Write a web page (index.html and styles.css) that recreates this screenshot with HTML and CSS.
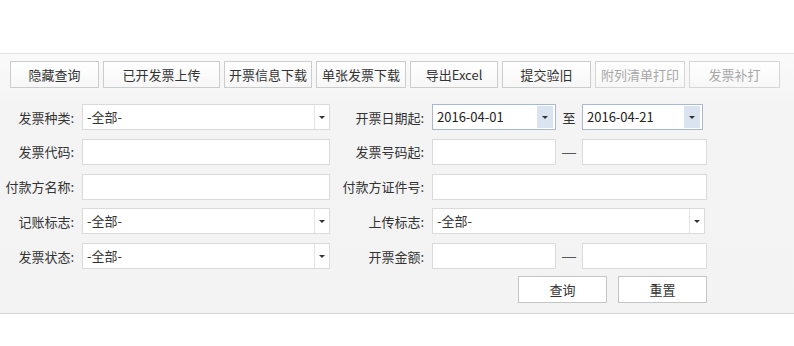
FILE: index.html
```html
<!DOCTYPE html>
<html lang="zh-CN">
<head>
<meta charset="utf-8">
<title>发票查询</title>
<link rel="stylesheet" href="styles.css">
</head>
<body>
<div class="page">
  <div class="panel">
    <div class="toolbar">
      <button class="tb w89">隐藏查询</button>
      <button class="tb w117">已开发票上传</button>
      <button class="tb w88">开票信息下载</button>
      <button class="tb w90">单张发票下载</button>
      <button class="tb w88">导出Excel</button>
      <button class="tb w89">提交验旧</button>
      <button class="tb w90 disabled">附列清单打印</button>
      <button class="tb w91 disabled">发票补打</button>
    </div>
    <div class="form">
      <label class="lbl">发票种类:</label>
      <div class="select"><span class="val">-全部-</span><span class="arrow"><i class="tri"></i></span></div>
      <label class="lbl">开票日期起:</label>
      <div class="pair">
        <div class="date d1"><span class="val">2016-04-01</span><span class="darrow"><i class="tri"></i></span></div>
        <span class="sep">至</span>
        <div class="date d2"><span class="val">2016-04-21</span><span class="darrow"><i class="tri"></i></span></div>
      </div>

      <label class="lbl">发票代码:</label>
      <div class="input"></div>
      <label class="lbl">发票号码起:</label>
      <div class="pair">
        <div class="input i1"></div>
        <span class="sep dash">—</span>
        <div class="input i2"></div>
      </div>

      <label class="lbl">付款方名称:</label>
      <div class="input"></div>
      <label class="lbl">付款方证件号:</label>
      <div class="input"></div>

      <label class="lbl">记账标志:</label>
      <div class="select"><span class="val">-全部-</span><span class="arrow"><i class="tri"></i></span></div>
      <label class="lbl">上传标志:</label>
      <div class="select s2"><span class="val">-全部-</span><span class="arrow"><i class="tri"></i></span></div>

      <label class="lbl">发票状态:</label>
      <div class="select"><span class="val">-全部-</span><span class="arrow"><i class="tri"></i></span></div>
      <label class="lbl">开票金额:</label>
      <div class="pair">
        <div class="input i1"></div>
        <span class="sep dash">—</span>
        <div class="input i2"></div>
      </div>

      <div class="actions">
        <button class="btn">查询</button>
        <button class="btn">重置</button>
      </div>
    </div>
  </div>
</div>
</body>
</html>
```
FILE: styles.css
```css
* { box-sizing: border-box; }
html, body {
  margin: 0;
  padding: 0;
  background: #ffffff;
  font-family: "Noto Sans CJK SC", "Noto Sans", "Liberation Sans", sans-serif;
  font-size: 13px;
  color: #333333;
}
.page { padding-top: 53px; }
.panel {
  border-top: 1px solid #e2e2e2;
  border-bottom: 1px solid #d6d6d6;
  background: linear-gradient(#fafafa, #f4f4f4 20%, #f3f3f3);
}
.toolbar {
  display: flex;
  gap: 4px;
  padding: 7px 10px 0 10px;
}
.tb {
  height: 27px;
  padding: 0;
  border: 1px solid #cccccc;
  background: linear-gradient(#ffffff, #f7f7f7);
  font-family: inherit;
  font-size: 13px;
  color: #333333;
  line-height: 25px;
  text-align: center;
}
.tb.disabled { color: #a8a8a8; border-color: #d6d6d6; }
.w88 { width: 88px; }
.w89 { width: 89px; }
.w90 { width: 90px; }
.w91 { width: 91px; }
.w117 { width: 117px; }

.form {
  display: grid;
  grid-template-columns: 82px 248px 102px 275px;
  grid-auto-rows: 26px;
  row-gap: 8.75px;
  padding: 16px 0 9px 0;
}
.lbl {
  display: flex;
  align-items: center;
  justify-content: flex-end;
  padding-right: 8px;
  white-space: nowrap;
  color: #333333;
}
.input, .select, .date {
  height: 26px;
  background: #ffffff;
  border: 1px solid #dadada;
}
.select {
  display: flex;
  align-items: center;
}
.select.s2 { width: 273px; }
.val {
  flex: 1;
  padding-left: 4px;
  line-height: 24px;
  white-space: nowrap;
}
.arrow {
  width: 15px;
  height: 24px;
  border-left: 1px solid #e4e4e4;
  display: flex;
  align-items: center;
  justify-content: center;
}
.tri {
  display: block;
  width: 0;
  height: 0;
  border-left: 3px solid transparent;
  border-right: 3px solid transparent;
  border-top: 3px solid #333333;
}
.pair {
  display: flex;
  align-items: center;
}
.date {
  display: flex;
  align-items: center;
  border-color: #a9b8cc;
}
.d1 { width: 124px; }
.d2 { width: 121px; }
.date .val { color: #222222; }
.darrow {
  width: 16px;
  height: 22px;
  margin-right: 2px;
  background: #dae4f0;
  display: flex;
  align-items: center;
  justify-content: center;
}
.sep {
  width: 26px;
  text-align: center;
  color: #333333;
}
.dash {
  font-family: "Liberation Sans", sans-serif;
  font-size: 14px;
  color: #555555;
}
.i1 { width: 124px; }
.i2 { width: 125px; }

.actions {
  grid-column: 4;
  display: flex;
  justify-content: flex-end;
  gap: 11px;
  height: 27px;
  margin-top: -1.75px;
}
.btn {
  width: 89px;
  height: 27px;
  padding: 0;
  border: 1px solid #c4c4c4;
  background: #ffffff;
  font-family: inherit;
  font-size: 13px;
  color: #333333;
}
```
